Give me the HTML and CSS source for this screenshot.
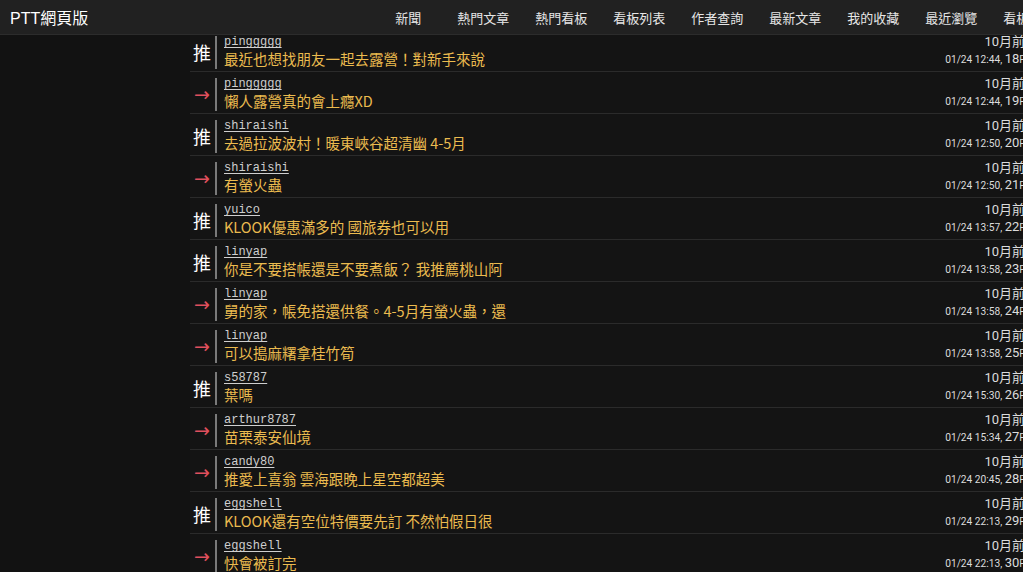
FILE: index.html
```html
<!DOCTYPE html>
<html lang="zh-TW">
<head>
<meta charset="utf-8">
<title>PTT網頁版</title>
<link rel="stylesheet" href="styles.css">
</head>
<body>
<header class="topbar">
  <div class="logo">PTT網頁版</div>
  <nav class="nav">
    <a class="nav-item first">新聞</a>
    <a class="nav-item">熱門文章</a>
    <a class="nav-item">熱門看板</a>
    <a class="nav-item">看板列表</a>
    <a class="nav-item">作者查詢</a>
    <a class="nav-item">最新文章</a>
    <a class="nav-item">我的收藏</a>
    <a class="nav-item">最近瀏覽</a>
    <a class="nav-item">看板搜尋</a>
  </nav>
</header>
<main class="page">
  <div class="pushes">
    <div class="push"><span class="tag good">推</span><span class="bar"></span><div class="body"><a class="user">pinggggg</a><div class="text">最近也想找朋友一起去露營！對新手來說</div></div><div class="meta"><div class="ago">10月前</div><div class="time">01/24 12:44, <b>18</b>F</div></div></div>
    <div class="push"><span class="tag arrow">→</span><span class="bar"></span><div class="body"><a class="user">pinggggg</a><div class="text">懶人露營真的會上癮XD</div></div><div class="meta"><div class="ago">10月前</div><div class="time">01/24 12:44, <b>19</b>F</div></div></div>
    <div class="push"><span class="tag good">推</span><span class="bar"></span><div class="body"><a class="user">shiraishi</a><div class="text">去過拉波波村！暖東峽谷超清幽 4-5月</div></div><div class="meta"><div class="ago">10月前</div><div class="time">01/24 12:50, <b>20</b>F</div></div></div>
    <div class="push"><span class="tag arrow">→</span><span class="bar"></span><div class="body"><a class="user">shiraishi</a><div class="text">有螢火蟲</div></div><div class="meta"><div class="ago">10月前</div><div class="time">01/24 12:50, <b>21</b>F</div></div></div>
    <div class="push"><span class="tag good">推</span><span class="bar"></span><div class="body"><a class="user">yuico</a><div class="text">KLOOK優惠滿多的 國旅券也可以用</div></div><div class="meta"><div class="ago">10月前</div><div class="time">01/24 13:57, <b>22</b>F</div></div></div>
    <div class="push"><span class="tag good">推</span><span class="bar"></span><div class="body"><a class="user">linyap</a><div class="text">你是不要搭帳還是不要煮飯？ 我推薦桃山阿</div></div><div class="meta"><div class="ago">10月前</div><div class="time">01/24 13:58, <b>23</b>F</div></div></div>
    <div class="push"><span class="tag arrow">→</span><span class="bar"></span><div class="body"><a class="user">linyap</a><div class="text">舅的家，帳免搭還供餐。4-5月有螢火蟲，還</div></div><div class="meta"><div class="ago">10月前</div><div class="time">01/24 13:58, <b>24</b>F</div></div></div>
    <div class="push"><span class="tag arrow">→</span><span class="bar"></span><div class="body"><a class="user">linyap</a><div class="text">可以搗麻糬拿桂竹筍</div></div><div class="meta"><div class="ago">10月前</div><div class="time">01/24 13:58, <b>25</b>F</div></div></div>
    <div class="push"><span class="tag good">推</span><span class="bar"></span><div class="body"><a class="user">s58787</a><div class="text">葉嗎</div></div><div class="meta"><div class="ago">10月前</div><div class="time">01/24 15:30, <b>26</b>F</div></div></div>
    <div class="push"><span class="tag arrow">→</span><span class="bar"></span><div class="body"><a class="user">arthur8787</a><div class="text">苗栗泰安仙境</div></div><div class="meta"><div class="ago">10月前</div><div class="time">01/24 15:34, <b>27</b>F</div></div></div>
    <div class="push"><span class="tag arrow">→</span><span class="bar"></span><div class="body"><a class="user">candy80</a><div class="text">推愛上喜翁 雲海跟晚上星空都超美</div></div><div class="meta"><div class="ago">10月前</div><div class="time">01/24 20:45, <b>28</b>F</div></div></div>
    <div class="push"><span class="tag good">推</span><span class="bar"></span><div class="body"><a class="user">eggshell</a><div class="text">KLOOK還有空位特價要先訂 不然怕假日很</div></div><div class="meta"><div class="ago">10月前</div><div class="time">01/24 22:13, <b>29</b>F</div></div></div>
    <div class="push"><span class="tag arrow">→</span><span class="bar"></span><div class="body"><a class="user">eggshell</a><div class="text">快會被訂完</div></div><div class="meta"><div class="ago">10月前</div><div class="time">01/24 22:13, <b>30</b>F</div></div></div>
  </div>
</main>
</body>
</html>
```

FILE: styles.css
```css
html, body {
  margin: 0;
  padding: 0;
  background: #121212;
  overflow: hidden;
  height: 572px;
}
body {
  font-family: "Noto Sans CJK TC", "Noto Sans", sans-serif;
  color: #ddd;
}
.topbar {
  position: relative;
  z-index: 2;
  height: 35px;
  background: #212121;
  border-bottom: 1px solid #2c2c2c;
  box-sizing: border-box;
  display: flex;
  align-items: center;
  white-space: nowrap;
  overflow: hidden;
  padding-left: 10px;
}
.logo {
  font-family: "Liberation Sans", "Noto Sans CJK TC", sans-serif;
  font-size: 16px;
  color: #fff;
  flex: none;
}
.nav {
  display: flex;
  margin-left: 294px;
  flex: none;
}
.nav-item {
  font-family: "Noto Sans CJK TC", sans-serif;
  font-size: 13px;
  color: #e6e6e6;
  padding: 0 13px;
  line-height: 35px;
}
.nav-item.first {
  margin-right: 10px;
}
.page {
  margin-top: -5px;
  padding-left: 190px;
  width: 1025px;
  box-sizing: border-box;
}
.pushes {
  width: 835px;
}
.push {
  display: flex;
  height: 41px;
  border-bottom: 1px solid #2b2b2b;
  background: #141414;
}
.tag {
  width: 24px;
  flex: none;
  display: flex;
  align-items: center;
  justify-content: center;
  padding-top: 2px;
}
.tag.good {
  color: #fff;
  font-size: 18px;
}
.tag.arrow {
  color: #e0505e;
  font-family: "DejaVu Sans", sans-serif;
  font-size: 19px;
}
.bar {
  flex: none;
  width: 2px;
  margin: 6px 0 2px 1px;
  background: #7a7a7a;
}
.body {
  flex: 1;
  padding: 4px 0 0 7px;
  min-width: 0;
}
.user {
  display: block;
  font-family: "Liberation Mono", "DejaVu Sans Mono", monospace;
  font-size: 12px;
  line-height: 16px;
  color: #cfcfcf;
  text-decoration: underline;
  text-underline-offset: 2px;
}
.text {
  font-family: "Noto Sans CJK TC", sans-serif;
  font-size: 14.5px;
  line-height: 18px;
  color: #ebbb4f;
  white-space: nowrap;
}
.meta {
  flex: none;
  text-align: right;
  padding-top: 4px;
  font-family: Roboto, "Noto Sans CJK TC", sans-serif;
  color: #dcdcdc;
}
.ago {
  font-size: 13px;
  line-height: 16px;
}
.time {
  font-size: 10.2px;
  line-height: 18px;
}
.time b {
  font-weight: normal;
  font-size: 13px;
}
```
